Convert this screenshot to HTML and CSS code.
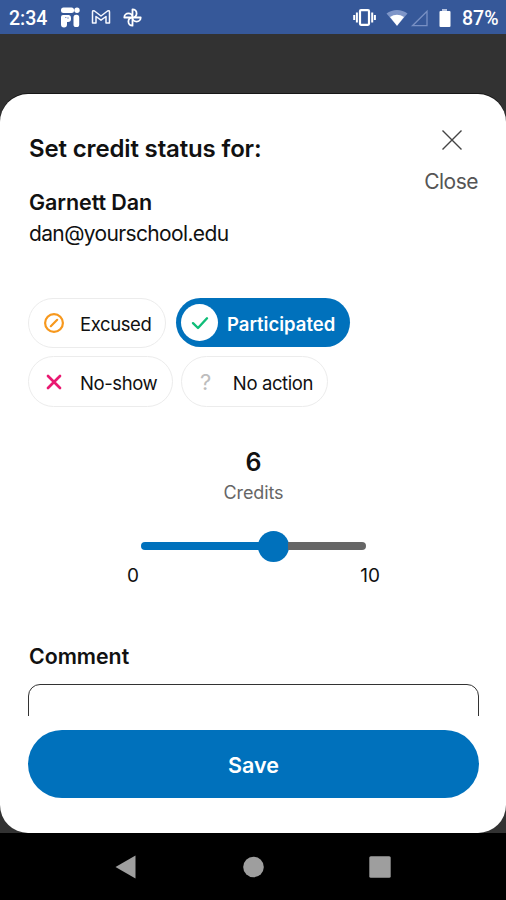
FILE: index.html
```html
<!DOCTYPE html>
<html lang="en">
<head>
<meta charset="utf-8">
<title>Set credit status</title>
<link rel="stylesheet" href="styles.css">
</head>
<body>
<div class="phone">
  <header class="status-bar">
    <span class="clock">2:34</span>
    <svg class="left-icons" width="84" height="22" viewBox="0 0 84 22" fill="#fff">
      <rect x="1" y="1.5" width="13" height="5.5" rx="2.5"/><circle cx="17" cy="4.2" r="2.7"/>
      <path d="M1 11a2 2 0 0 1 2-2h6a3 3 0 0 1 2 3v1a3 3 0 0 1-3 3H7v2.500a2.500 2.500 0 0 1-6 0z"/>
      <rect x="13.500" y="8.800" width="5.700" height="12.300" rx="2.600"/>
      <path d="M5 11.500h1.500m1.500 1.500v-2" fill="none" stroke="#8ca0cf" stroke-width="1"/>
      <path d="M32.500 17V6q0-2 2-1l6.500 5 6.500-5q2-1 2 1v11h-3.500v-6.500L41 14.200l-5-3.700V17z" fill="none" stroke="#f5f7ff" stroke-width="1.500" stroke-linejoin="round"/>
      <path d="M72.500 11.500V3.300a4.100 4.100 0 0 1 0 8.200h8.200a4.100 4.100 0 0 1-8.200 0v8.200a4.100 4.100 0 0 1 0-8.200h-8.200a4.100 4.100 0 0 1 8.200 0z" fill="none" stroke="#fff" stroke-width="1.800" stroke-linejoin="round"/>
    </svg>
    <svg class="right-icons" width="100" height="22" viewBox="0 0 100 22" fill="#fff">
      <rect x="8" y="4.200" width="9" height="14.600" rx="1" fill="none" stroke="#fff" stroke-width="2.200"/>
      <path d="M4.900 6.500v10M20.200 6.500v10M2.200 9v5M22.900 9v5" stroke="#fff" stroke-width="2"/>
      <path d="M34.500 7.500C40.500 2.800 49.500 2.800 55.500 7.500L45 20z" fill="#7f96c8"/>
      <path d="M38 11q7-4.600 14 0l-7 8.800z"/>
      <path d="M75 5.300v14.400H60.500z" fill="none" stroke="#7890c4" stroke-width="1.300"/>
      <rect x="90" y="3" width="5" height="3" fill="#b8c5e1"/><rect x="87.500" y="5" width="11" height="16" rx="1"/>
    </svg>
    <span class="battery">87%</span>
  </header>

  <main class="sheet">
    <div class="content">
      <div class="heading">
        <div class="person">
          <h1>Set credit status for:</h1>
          <h2>Garnett Dan</h2>
          <p>dan@yourschool.edu</p>
        </div>
        <button class="close">
          <svg width="22" height="22" viewBox="0 0 22 22"><path d="M1.500 1.500l19 19m0-19l-19 19" stroke="#444" stroke-width="1.400"/></svg>
          <span>Close</span>
        </button>
      </div>

      <div class="chips">
        <button class="chip excused">
          <svg width="22" height="22" viewBox="0 0 22 22" fill="none" stroke="#f7981d"><circle cx="11" cy="11" r="8.900" stroke-width="2.200"/><path d="M7.800 14.200l6.400-6.400" stroke-width="2.200" stroke-linecap="round"/></svg>
          <span>Excused</span>
        </button>
        <button class="chip participated">
          <span class="disc"><svg width="18" height="14" viewBox="0 0 18 14"><path d="M2 7.200l5 4.800L16 2.300" fill="none" stroke="#10bd78" stroke-width="2.400" stroke-linecap="round" stroke-linejoin="round"/></svg></span>
          <span>Participated</span>
        </button>
        <button class="chip no-show">
          <svg width="22" height="22" viewBox="0 0 22 22"><path d="M5 5l12 12m0-12L5 17" stroke="#e91971" stroke-width="2.700" stroke-linecap="round"/></svg>
          <span>No-show</span>
        </button>
        <button class="chip no-action">
          <span class="question">?</span>
          <span>No action</span>
        </button>
      </div>

      <div class="credits">
        <strong>6</strong>
        <span class="unit">Credits</span>
        <div class="slider"><div class="done"></div><div class="thumb"></div><div class="rest"></div></div>
        <div class="limits"><span>0</span><span>10</span></div>
      </div>

      <label class="comment-label">Comment</label>
      <div class="comment-field"></div>
    </div>
    <button class="save">Save</button>
  </main>

  <nav class="nav-bar">
    <svg width="22" height="24" viewBox="0 0 22 24"><path d="M.5 12L20.500.5v23z" fill="#9e9e9e"/></svg>
    <svg width="22" height="24" viewBox="0 0 22 24"><circle cx="11.500" cy="12" r="10.300" fill="#9e9e9e"/></svg>
    <svg width="22" height="24" viewBox="0 0 22 24"><rect x=".3" y="1.200" width="21.400" height="21.600" rx="1.500" fill="#9e9e9e"/></svg>
  </nav>
</div>
</body>
</html>
```

FILE: styles.css
```css
* { box-sizing: border-box; }
body { margin: 0; background: #323232; font-family: Inter, "Liberation Sans", sans-serif; color: #111; }
h1, h2, p { margin: 0; }
button { border: 0; padding: 0; background: none; font: inherit; color: inherit; }
svg { display: block; flex: none; }

.phone { width: 506px; height: 900px; display: flex; flex-direction: column; overflow: hidden; background: #323232; }

.status-bar { height: 34px; margin-bottom: 60px; padding: 0 8px 0 9px; display: flex; align-items: center; background: #365899; color: #fff; font: 500 19.5px/34px Roboto, sans-serif; }
.clock { width: 51px; padding-top: 3px; }
.battery { width: 36px; margin-left: 9px; padding-top: 3px; white-space: nowrap; }
.right-icons { margin-left: auto; margin-right: 1px; }

.sheet { height: 739px; padding: 0 27px 35px 28px; display: flex; flex-direction: column; background: #fff; border-radius: 28px; box-shadow: 0 -1px 0 #171717; }
.content { height: 622px; flex: none; overflow: hidden; display: flex; flex-direction: column; }

.heading { height: 204px; flex: none; padding-top: 36px; display: flex; justify-content: space-between; }
.person { padding-left: 1px; }
h1 { height: 36px; font-size: 24px; line-height: 37px; font-weight: 600; letter-spacing: -0.15px; white-space: nowrap; }
h2 { margin-top: 21px; font-size: 21.5px; line-height: 31px; font-weight: 600; letter-spacing: -0.08px; }
.person p { font-size: 21px; line-height: 31px; letter-spacing: -0.64px; }
.close { height: 64px; display: flex; flex-direction: column; align-items: center; color: #555; font-size: 21px; line-height: 26px; letter-spacing: -0.5px; }
.close svg { margin: -1px 0 18px; }
.close span { margin-left: -1px; margin-right: 1px; }

.chips { height: 109px; flex: none; display: flex; flex-wrap: wrap; gap: 8px 9px; align-content: flex-start; }
.chip { height: 50px; display: flex; align-items: center; border: 1.5px solid #ececec; border-radius: 26px; font-size: 18.5px; line-height: 24px; letter-spacing: -0.4px; white-space: nowrap; }
.chip > span:last-child { padding-top: 2px; }
.excused { width: 138px; padding-left: 14px; gap: 15px; }
.no-show { width: 145px; height: 51px; padding-left: 14px; gap: 15px; }
.no-action { width: 147px; height: 51px; margin-left: -1px; padding-left: 18px; gap: 22px; }
.question { color: #bdbdbd; font-size: 22px; }
.participated { width: 174px; height: 49px; margin-left: 1px; margin-right: 60px; padding-left: 5px; gap: 9px; border: 0; background: #0071bc; color: #fff; font-weight: 600; letter-spacing: 0; }
.disc { width: 37px; height: 37px; border-radius: 50%; background: #fff; display: flex; align-items: center; justify-content: center; }

.credits { height: 231px; flex: none; padding-top: 40px; display: flex; flex-direction: column; align-items: center; }
.credits strong { font-size: 25px; line-height: 31px; font-weight: 600; }
.unit { color: #666; font-size: 18px; line-height: 30px; letter-spacing: -0.1px; }
.slider { width: 225px; height: 32px; margin-top: 22px; display: flex; align-items: center; }
.done { width: 118px; height: 8px; border-radius: 4px 0 0 4px; background: #0071bc; }
.thumb { width: 31px; height: 31px; margin: 0 -1px; border-radius: 50%; background: #0071bc; }
.rest { flex: 1; height: 8px; border-radius: 0 4px 4px 0; background: #666; }
.limits { width: 253px; display: flex; justify-content: space-between; font-size: 19px; line-height: 28px; }

.comment-label { height: 46px; flex: none; padding: 3px 1px; font-size: 21.3px; line-height: 30px; font-weight: 600; }
.comment-field { flex: none; height: 110px; border: 1.5px solid #333; border-radius: 12px; }
.save { height: 68px; margin-top: 14px; flex: none; border-radius: 34px; background: #0071bc; color: #fff; font-size: 21.5px; line-height: 71px; font-weight: 600; }

.nav-bar { height: 67px; padding: 0 115px; display: flex; justify-content: space-between; align-items: center; background: #000; }
```
